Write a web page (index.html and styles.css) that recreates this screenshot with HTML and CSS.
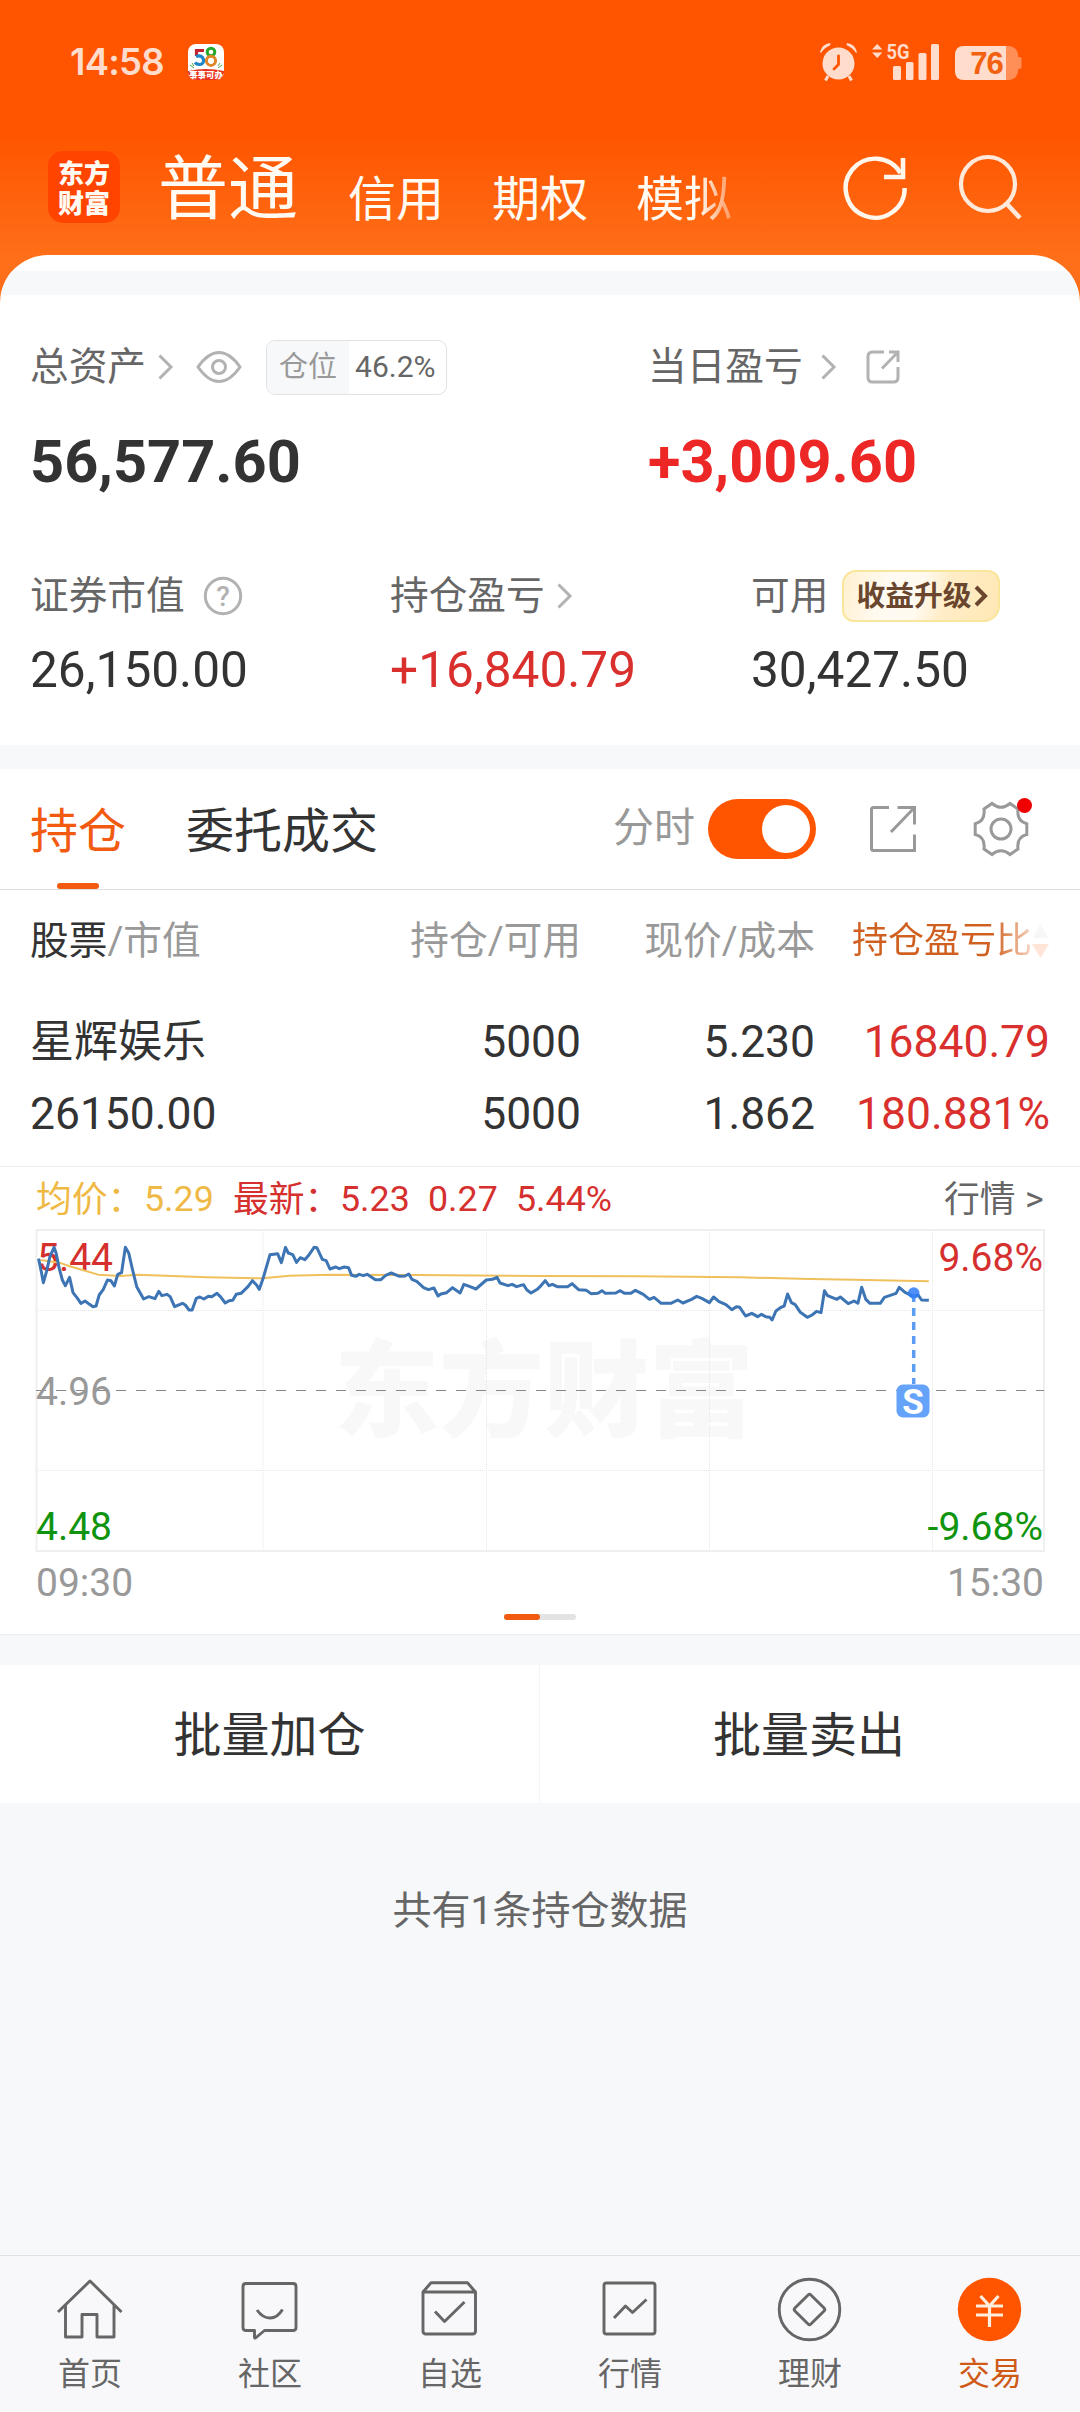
FILE: index.html
```html
<!DOCTYPE html>
<html lang="zh-CN">
<head>
<meta charset="utf-8">
<title>交易</title>
<link rel="stylesheet" href="styles.css">
</head>
<body>
<div class="app">
  <header class="top">
    <div class="status">
      <span class="clock">14:58</span>
      <svg class="app58" width="36" height="36" viewBox="0 0 36 36">
        <defs><clipPath id="tile"><rect width="36" height="36" rx="8"/></clipPath></defs>
        <g clip-path="url(#tile)">
          <rect width="36" height="36" fill="#fff"/>
          <path d="M0 27Q18 23 36 27V36H0Z" fill="#e8341c"/>
          <path d="M2 21l4 3M34 21l-4 3M4 19l2 3M32 19l-2 3" stroke="#59a84a" stroke-width="1"/>
          <path d="M16 6.500H8.500V12" fill="none" stroke="#c4202f" stroke-width="3.200"/>
          <path d="M8 12.500C16 9 18.500 20.500 11.500 20.500Q8.500 20.500 7 18.500" fill="none" stroke="#1c86c8" stroke-width="3.200"/>
          <circle cx="23" cy="8" r="3.800" fill="none" stroke="#25a82c" stroke-width="3"/>
          <circle cx="23" cy="16.800" r="4.600" fill="none" stroke="#e0862a" stroke-width="3"/>
          <text x="18" y="33.500" class="tile-text">事事可办</text>
        </g>
      </svg>
      <svg class="alarm" width="37" height="38" viewBox="0 0 37 38">
        <path d="M0 9Q2 1 10 0L10.500 2Q4 5 1 10ZM37 9Q35 1 27 0L26.500 2Q33 5 36 10Z" fill="#ffdccb"/>
        <path d="M8 33L5.500 37.500M29 33l2.500 4.500" stroke="#ffdccb" stroke-width="3"/>
        <circle cx="18.500" cy="20.500" r="16" fill="#ffdccb"/>
        <path d="M18.500 13v8.500L14 26" fill="none" stroke="#ff5500" stroke-width="2.800" stroke-linecap="round"/>
      </svg>
      <svg class="signal" width="68" height="38" viewBox="0 0 68 38">
        <g fill="#ffdccb">
          <path d="M0 6.500L5.200 1l5.200 5.500ZM0 9.500L5.200 15l5.200-5.500Z"/>
          <text x="14.500" y="15.800" class="net" textLength="23" lengthAdjust="spacingAndGlyphs">5G</text>
          <rect x="21" y="23" width="8" height="14" rx="1.500"/>
          <rect x="34" y="19" width="7.500" height="18" rx="1.500"/>
          <rect x="46.500" y="10" width="8" height="27" rx="1.500"/>
          <rect x="59" y="1" width="8" height="36" rx="1.500"/>
        </g>
      </svg>
      <svg class="battery" width="67" height="34" viewBox="0 0 67 34">
        <rect width="63" height="34" rx="9" fill="#ff8e57"/>
        <path d="M63 11h1.500q2 0 2 2v8q0 2-2 2H63Z" fill="#ff8e57"/>
        <path d="M9 0H51V34H9Q0 34 0 25V9Q0 0 9 0Z" fill="#ffdccb"/>
        <text x="31.500" y="28.300" class="pct">76</text>
      </svg>
    </div>
    <nav class="accounts">
      <div class="logo"><span>东方</span><span>财富</span></div>
      <span class="acct current">普通</span>
      <span class="acct">信用</span>
      <span class="acct">期权</span>
      <span class="acct fading">模拟</span>
      <svg class="refresh" width="64" height="66" viewBox="0 0 64 66">
        <path d="M60.700 33A29.500 29.500 0 1 1 56.500 18" fill="none" stroke="#fff6ec" stroke-width="4.400"/>
        <path d="M59 3V22H40" fill="none" stroke="#fff6ec" stroke-width="4.600"/>
      </svg>
      <svg class="search" width="64" height="66" viewBox="0 0 64 66">
        <circle cx="29" cy="30" r="27" fill="none" stroke="#ffe9da" stroke-width="4.200"/>
        <path d="M47.500 49.500L61 64" stroke="#ffe9da" stroke-width="4.600"/>
      </svg>
    </nav>
  </header>

  <main class="sheet">
    <div class="strip"></div>
    <section class="assets">
      <div class="assets-main">
        <div class="cell">
          <div class="label">
            <span>总资产</span>
            <svg class="chev" width="15" height="26" viewBox="0 0 15 26"><path d="M1.500 1.500L13 13L1.500 24.500"/></svg>
            <svg class="eye" width="46" height="32" viewBox="0 0 46 32"><path d="M2 16Q12 1.500 23 1.500T44 16Q34 30.500 23 30.500T2 16Z"/><circle cx="23" cy="16" r="6.500"/></svg>
            <span class="ratio"><span class="ratio-key">仓位</span><span class="ratio-val">46.2%</span></span>
          </div>
          <div class="big">56,577.60</div>
        </div>
        <div class="cell">
          <div class="label">
            <span>当日盈亏</span>
            <svg class="chev wide" width="15" height="26" viewBox="0 0 15 26"><path d="M1.500 1.500L13 13L1.500 24.500"/></svg>
            <svg class="share" width="34" height="34" viewBox="0 0 34 34"><path d="M18 2H6.500Q2 2 2 6.500V27.500Q2 32 6.500 32H27.500Q32 32 32 27.500V17M23 2H32V12M32 2L16 18.500"/></svg>
          </div>
          <div class="big up">+3,009.60</div>
        </div>
      </div>
      <div class="assets-sub">
        <div class="cell">
          <div class="label"><span>证券市值</span>
            <svg class="help" width="40" height="40" viewBox="0 0 40 40"><circle cx="20" cy="20" r="17.700"/><text x="20" y="30">?</text></svg>
          </div>
          <div class="mid">26,150.00</div>
        </div>
        <div class="cell">
          <div class="label"><span>持仓盈亏</span>
            <svg class="chev" width="15" height="26" viewBox="0 0 15 26"><path d="M1.500 1.500L13 13L1.500 24.500"/></svg>
          </div>
          <div class="mid up">+16,840.79</div>
        </div>
        <div class="cell">
          <div class="label"><span>可用</span>
            <span class="promo">收益升级<svg width="14" height="22" viewBox="0 0 14 22"><path d="M2 2L11 11L2 20"/></svg></span>
          </div>
          <div class="mid">30,427.50</div>
        </div>
      </div>
    </section>
    <div class="strip"></div>

    <section class="tabs">
      <span class="tab on">持仓</span>
      <span class="tab">委托成交</span>
      <span class="switch-label">分时</span>
      <span class="switch"><i></i></span>
      <svg class="open" width="48" height="48" viewBox="0 0 48 48"><path d="M20 2.500H4.500Q2.500 2.500 2.500 4.500V43.500Q2.500 45.500 4.500 45.500H45.500V29.500M28.500 2.500H45.500V19.500M45.500 2.500L22 27"/></svg>
      <span class="gear">
        <svg width="56" height="56" viewBox="0 0 56 56"><path d="M19 2.500Q28 10 37 2.500L45 8Q43.500 20 53.800 22.800V33.500Q43.500 36 45 48L37 53.500Q28 46 19 53.500L11 48Q12.500 36 2.200 33.500V22.800Q12.500 20 11 8Z"/><circle cx="28" cy="28" r="10"/></svg>
        <b></b>
      </span>
    </section>

    <section class="table">
      <div class="row head">
        <span><em>股票</em>/市值</span><span>持仓/可用</span><span>现价/成本</span>
        <span class="sorted"><span class="sort-text">持仓盈亏比</span><svg width="17" height="36" viewBox="0 0 17 36"><path d="M1 15L8.500 1L16 15Z" fill="#f7f7f7"/><path d="M0 21H17L8.500 35Z" fill="#ffe4d8"/></svg></span>
      </div>
      <div class="row"><span class="name">星辉娱乐</span><span>5000</span><span>5.230</span><span class="up">16840.79</span></div>
      <div class="row"><span>26150.00</span><span>5000</span><span>1.862</span><span class="up">180.881%</span></div>
    </section>

    <section class="chart">
      <svg width="1080" height="467" viewBox="0 7 1080 467">
        <g class="legend">
          <text x="36" y="52" class="avg">均价：</text><text x="144" y="51" class="avg">5.29</text>
          <text x="233" y="52" class="red">最新：</text><text x="340" y="51" class="red">5.23</text>
          <text x="428" y="51" class="red">0.27</text><text x="516" y="51" class="red">5.44%</text>
          <text x="944" y="52" class="more">行情</text><text x="1025" y="51" class="more">&gt;</text>
        </g>
        <text x="334" y="268" class="mark">东方财富</text>
        <rect x="36.500" y="70" width="1007.500" height="321" class="frame"/>
        <path d="M263 70V391M486.500 70V391M709.500 70V391M932.500 70V391M36 150.500H1044M36 310.500H1044" class="grid"/>
        <path d="M36 230.500H1044" class="base"/>
        <g class="axis">
          <text x="37" y="111" class="red">5.44</text><text x="1043" y="111" class="red end">9.68%</text>
          <text x="36" y="245" class="dim">4.96</text>
          <text x="36" y="380" class="green">4.48</text><text x="1043" y="380" class="green end">-9.68%</text>
          <text x="36" y="436" class="dim">09:30</text><text x="1044" y="436" class="dim end">15:30</text>
        </g>
        <g transform="scale(.34439 .33333)">
          <polyline class="avg-line" points="118,300 172,308 200,318 285,344 350,348 400,344 600,352 763,355 840,347 960,344 1200,345 1568,348 1850,349 2150,352 2350,357 2480,359 2697,364"/>
          <polyline class="price-line" points="112,296 118,325 126,368 135,335 145,290 157,262 163,280 172,325 181,360 190,377 202,352 212,398 225,415 235,430 247,423 260,433 270,440 279,438 288,405 300,388 312,360 322,362 332,378 342,343 353,338 364,262 374,280 385,330 397,380 417,417 432,410 450,416 461,394 470,407 485,403 494,410 507,440 530,430 538,435 549,450 558,450 570,415 580,411 592,417 605,409 615,410 630,400 640,410 654,429 665,422 676,421 686,403 700,400 720,380 733,362 745,375 753,388 764,355 784,284 806,281 817,308 829,262 837,279 850,284 861,307 872,293 885,299 897,285 912,262 920,263 936,298 947,302 958,327 975,321 985,326 1000,321 1012,323 1021,346 1033,349 1043,343 1055,347 1066,343 1090,359 1106,359 1120,346 1136,339 1160,349 1176,348 1187,342 1196,358 1210,364 1230,383 1244,389 1260,384 1272,408 1280,402 1297,398 1314,383 1336,399 1347,373 1365,380 1382,387 1412,360 1430,358 1443,352 1452,369 1475,377 1487,373 1500,380 1520,374 1530,390 1542,399 1560,388 1568,380 1583,362 1594,377 1604,373 1618,380 1648,380 1661,371 1680,389 1703,391 1716,401 1736,400 1748,392 1758,400 1788,399 1801,392 1813,400 1832,400 1845,391 1868,403 1886,418 1899,412 1920,430 1948,430 1968,420 1983,429 2008,418 2023,409 2038,415 2060,428 2072,411 2088,425 2108,434 2125,449 2138,440 2148,442 2165,468 2183,460 2200,470 2211,463 2223,470 2235,472 2242,480 2253,453 2268,442 2277,438 2287,402 2298,428 2309,434 2324,457 2344,472 2358,465 2371,454 2384,458 2394,392 2403,407 2430,418 2440,411 2463,431 2480,423 2491,430 2502,382 2514,418 2526,430 2556,430 2568,412 2602,400 2611,382 2628,397 2640,403 2653,410 2666,405 2676,420 2697,421"/>
        </g>
        <path d="M913.700 134V224" class="sell-line"/>
        <circle cx="913.700" cy="133" r="5.800" fill="#2f7df6" fill-opacity=".85"/>
        <rect x="896.500" y="224.500" width="33" height="33" rx="6.500" fill="#65a3fa"/>
        <text x="913" y="254" class="sell">S</text>
        <rect x="504" y="454" width="72" height="6" rx="3" fill="#e3e3e3"/>
        <rect x="504" y="454" width="36" height="6" rx="3" fill="#f25a10"/>
      </svg>
    </section>
  </main>

  <section class="batch"><span>批量加仓</span><span>批量卖出</span></section>
  <p class="summary">共有1条持仓数据</p>

  <nav class="bottom">
    <a><svg width="72" height="72" viewBox="0 0 72 72"><path d="M4 39L36 8L67.500 39M11.500 32.500V64H28V41.500H43V64H60V32.500"/></svg><span>首页</span></a>
    <a><svg width="72" height="72" viewBox="0 0 72 72"><path d="M12 10.500H59Q62 10.500 62 13.500V54.500Q62 57.500 59 57.500H30.500L21.500 65Q20.500 65.500 20.500 64V57.500H12Q9 57.500 9 54.500V13.500Q9 10.500 12 10.500Z"/><path d="M23 37Q28.500 45 36 45T48.500 36.500"/></svg><span>社区</span></a>
    <a><svg width="72" height="72" viewBox="0 0 72 72"><path d="M9 19L17 9.800H53.500L61.500 19M9 19V58Q9 61 12 61H58.500Q61.500 61 61.500 58V19ZM21 38.500L30.500 48.500L50.500 29"/></svg><span>自选</span></a>
    <a><svg width="72" height="72" viewBox="0 0 72 72"><rect x="10" y="10" width="51" height="51" rx="2.500"/><path d="M20 45L31.500 33L38.500 39.500L52.500 26.500"/></svg><span>行情</span></a>
    <a><svg width="72" height="72" viewBox="0 0 72 72"><circle cx="35.500" cy="36.500" r="30.300"/><rect x="24.200" y="25.200" width="22.600" height="22.600" rx="2" transform="rotate(45 35.500 36.500)"/></svg><span>理财</span></a>
    <a class="active"><svg width="72" height="72" viewBox="0 0 72 72"><circle cx="35.500" cy="36.500" r="31.700" class="disc"/><path d="M26.500 23L35.500 33L44.500 23M35.500 32V54M22 33H49M22 42H49" class="yen"/></svg><span>交易</span></a>
  </nav>
</div>
</body>
</html>
```
FILE: styles.css
```css
* { box-sizing: border-box; }
body { margin: 0; font-family: Roboto, "Noto Sans CJK SC", sans-serif; color: #333; }
.app { width: 1080px; height: 2412px; display: flex; flex-direction: column; background: #f7f8fa; overflow: hidden; }
svg { display: block; flex: none; overflow: visible; }
span { white-space: nowrap; }
.up { color: #d9302e; }

/* header */
.top { height: 311px; margin-bottom: -56px; background: linear-gradient(#ff5500 0, #ff5500 135px, #ff6e18 255px, #ff6e18 311px); flex: none; }
.status { height: 124px; padding: 0 58px 0 70px; display: flex; align-items: center; }
.clock { width: 118px; font: 600 36.500px/40px Inter, sans-serif; color: #ffdccb; letter-spacing: -0.8px; }
.tile-text { font: 900 8.500px "Noto Sans CJK SC", sans-serif; fill: #fff; text-anchor: middle; }
.alarm { margin-left: auto; }
.signal { margin-left: 15px; }
.net { font: 700 20px Roboto, sans-serif; }
.battery { margin: 2px 0 0 15px; }
.pct { font: 700 31px "Liberation Sans", sans-serif; fill: #f3600f; text-anchor: middle; letter-spacing: -1px; }
.accounts { height: 131px; padding-left: 48px; display: flex; align-items: flex-start; color: #fffaf2; }
.logo { width: 72px; height: 72px; margin: 27px 38px 0 0; padding-top: 6px; border-radius: 15px; background: #ff4400; display: flex; flex-direction: column; align-items: center; font: 900 26px/30px "Noto Sans CJK SC", sans-serif; }
.acct { font-size: 48px; line-height: 70px; margin: 41px 48px 0 0; }
.acct.current { font-size: 70px; margin: 31px 50px 0 0; }
.fading { -webkit-mask-image: linear-gradient(90deg, #000 65%, rgba(0,0,0,.35) 100%); mask-image: linear-gradient(90deg, #000 65%, rgba(0,0,0,.35) 100%); }
.refresh { margin: 31px 0 0 auto; }
.search { margin: 30px 57px 0 51px; }

/* assets */
.sheet { position: relative; background: #fff; border-radius: 48px 48px 0 0; padding-top: 16px; overflow: hidden; flex: none; }
.strip { height: 24px; background: #f7f8fa; }
.assets { height: 450px; padding: 45px 0 0 30px; }
.assets-main { height: 229px; display: grid; grid-template-columns: 618px 1fr; }
.assets-sub { display: grid; grid-template-columns: 360px 361px 1fr; }
.label { height: 54px; display: flex; align-items: center; font-size: 38.700px; line-height: 54px; color: #666; }
.label svg { fill: none; stroke: #b2b2b2; stroke-width: 3; }
.chev { margin-left: 12px; }
.chev.wide { margin-left: 18px; }
.eye { margin-left: 23px; }
.share { margin-left: 30px; }
.help { margin-left: 18px; }
.help text { font: 500 28px Roboto, sans-serif; text-anchor: middle; fill: #b2b2b2; stroke: none; }
.ratio { margin-left: 24px; height: 55px; display: flex; border: 1px solid #e2e2e4; border-radius: 9px; overflow: hidden; font-size: 30px; line-height: 52px; }
.ratio-key { width: 82px; padding-left: 12px; font-size: 29px; background: #f7f8fa; color: #999; }
.ratio-val { width: 97px; padding-left: 6px; }
.big { font-size: 59.500px; font-weight: 700; line-height: 70px; margin-top: 33px; }
.big.up { color: #ec2725; }
.mid { font-size: 49.600px; line-height: 60px; margin-top: 17px; }
.promo { margin-left: 14px; width: 158px; height: 52px; display: flex; align-items: center; padding-left: 12px; border: 2px solid #fae69a; border-radius: 14px 12px 16px 12px; background: linear-gradient(105deg, #fff0cf 0, #fffaf2 28%, #fffaf0 48%, #ffedc8 65%, #ffe8b5 100%); color: #69462d; font-size: 28.800px; font-weight: 700; }
.promo svg { margin-left: 2px; stroke: #69462d; stroke-width: 4; }

/* tabs */
.tabs { height: 121px; border-bottom: 1px solid #dfdfdf; padding-left: 30px; display: flex; align-items: center; }
.tab { font-size: 48px; height: 120px; line-height: 120px; padding-top: 3px; margin-right: 60px; position: relative; }
.tab.on { color: #f25a10; }
.tab.on::after { content: ""; position: absolute; left: 27px; bottom: 0; width: 42px; height: 6px; border-radius: 3px; background: #f25a10; }
.switch-label { margin-left: auto; font-size: 41px; line-height: 60px; margin-top: -2px; color: #999; }
.switch { width: 108px; height: 60px; margin-left: 13px; border-radius: 30px; background: #ff5500; padding: 6px; display: flex; justify-content: flex-end; }
.switch i { width: 48px; height: 48px; border-radius: 50%; background: #fff; }
.open { margin-left: 53px; }
.open, .gear svg { fill: none; stroke: #999; stroke-width: 3; }
.gear { margin: 0 51px 0 56px; position: relative; }
.gear b { position: absolute; right: -3px; top: -3px; width: 15px; height: 15px; border-radius: 50%; background: #f00000; }

/* holdings */
.table { height: 277px; border-bottom: 1px solid #ededed; }
.row { height: 72px; padding: 2px 30px 0; display: grid; grid-template-columns: 311px 240px 234px 1fr; align-items: center; text-align: right; font-size: 44.400px; line-height: 70px; }
.row > :first-child { text-align: left; }
.row.head { height: 115px; padding: 0 31px 14px 30px; font-size: 38.700px; color: #999; }
.head em { font-style: normal; color: #333; }
.name { font-size: 44px; }
.sorted { display: flex; align-items: center; justify-content: flex-end; font-size: 36px; }
.sort-text { background: linear-gradient(90deg, #d0601f 78%, #f8d5c2 100%); -webkit-background-clip: text; background-clip: text; color: transparent; }

/* chart */
.chart { height: 468px; border-bottom: 1px solid #ececec; }
.chart text { font-size: 35.800px; }
.chart .axis text { font-size: 39px; }
.chart .end { text-anchor: end; }
.avg { fill: #efb945; }
.red { fill: #d5302e; }
.green { fill: #109410; }
.dim { fill: #999; }
.more { fill: #666; }
.chart .mark { font-size: 105px; font-weight: 900; fill: #f8f8f8; }
.frame { fill: none; stroke: #efefef; stroke-width: 2; }
.grid { fill: none; stroke: #e6e6e6; stroke-dasharray: 1 1; }
.base { stroke: #888; stroke-dasharray: 10 10; }
.avg-line, .price-line { fill: none; vector-effect: non-scaling-stroke; stroke-linejoin: round; }
.avg-line { stroke: #efc05c; stroke-width: 2; }
.price-line { stroke: #3d74b4; stroke-width: 3; }
.sell-line { stroke: #5c9cf2; stroke-width: 3.500; stroke-dasharray: 8 6; }
.chart .sell { font: 700 35px Roboto, sans-serif; fill: #fff; text-anchor: middle; }

/* footer */
.batch { height: 138px; margin-top: 30px; padding-right: 2px; flex: none; background: #fff; display: grid; grid-template-columns: 1fr 1fr; text-align: center; font-size: 48px; line-height: 142px; }
.batch span + span { height: 138px; border-left: 1px solid #f3f4f5; }
.summary { margin: 78px 0 0; text-align: center; font-size: 39px; line-height: 60px; color: #666; }
.bottom { margin-top: auto; height: 157px; flex: none; border-top: 1px solid #dfe1e2; background: #f8f8fa; display: grid; grid-template-columns: repeat(6, 1fr); }
.bottom a { display: flex; flex-direction: column; align-items: center; padding-top: 17px; font-size: 32px; line-height: 46px; color: #666; }
.bottom svg { fill: none; stroke: #666; stroke-width: 2.900; stroke-linejoin: round; }
.bottom span { margin-top: 6px; }
.bottom .active { color: #cf5a18; }
.bottom .disc { fill: #ff5500; stroke: none; }
.bottom .yen { stroke: #ffeedd; stroke-width: 3.200; }
```
